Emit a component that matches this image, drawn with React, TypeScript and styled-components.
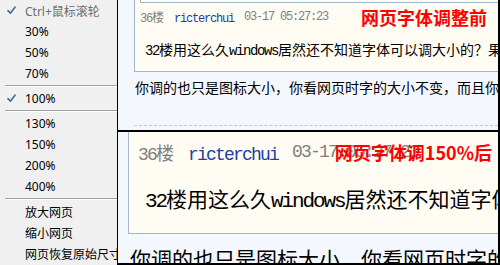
import React from "react";
import styled, { createGlobalStyle } from "styled-components";

// Reference layout: a zoom context menu on the left, two captures of the
// same forum post (100% and 150%) stacked on the right.

const GlobalStyle = createGlobalStyle`
  html, body {
    margin: 0;
    padding: 0;
    background: #ffffff;
  }
  #root {
    width: 500px;
    height: 265px;
    overflow: hidden;
  }
`;

const Frame = styled.div`
  display: flex;
  width: 500px;
  height: 265px;
  overflow: hidden;
`;

/* ---------- context menu ---------- */

const Menu = styled.ul`
  list-style: none;
  margin: 0;
  padding: 0;
  width: 117px;
  flex: none;
  background: #f0f0f0;
  border-right: 1px solid #000;
  font-family: "Noto Sans", "Noto Sans CJK SC", sans-serif;
  font-size: 12px;
  overflow: hidden;
`;

const MenuItem = styled.li<{ $disabled?: boolean }>`
  display: flex;
  align-items: center;
  height: 21px;
  white-space: nowrap;
  color: ${({ $disabled }) => ($disabled ? "#6d6d6d" : "#000")};
`;

const Gutter = styled.span`
  width: 25px;
  flex: none;
  display: flex;
  align-items: center;
  padding-left: 7px;
  box-sizing: border-box;
`;

const Separator = styled.li`
  height: 4px;
  padding-top: 1px;
  box-sizing: border-box;

  &::before {
    content: "";
    display: block;
    margin-left: 5px;
    border-top: 1px solid #a0a0a0;
    border-bottom: 1px solid #ffffff;
  }
`;

const Check = () => (
  <svg width="9" height="9" viewBox="0 0 9 9">
    <path
      d="M1 4.6 L3.4 7.2 L8 1.2"
      fill="none"
      stroke="#4d6a9c"
      strokeWidth="1.7"
      strokeLinecap="round"
      strokeLinejoin="round"
    />
  </svg>
);

/* ---------- captures ---------- */

const Shots = styled.div`
  flex: 1;
  min-width: 0;
  display: flex;
  flex-direction: column;
  border-right: 2px solid #000;
  overflow: hidden;
  font-family: "Noto Sans CJK SC", sans-serif;
  color: #000;
`;

const Shot = styled.section<{ $big?: boolean }>`
  height: ${({ $big }) => ($big ? 133 : 132)}px;
  flex: none;
  box-sizing: border-box;
  padding-left: ${({ $big }) => ($big ? 10 : 16)}px;
  background: #f4f7fd;
  border-bottom: 2px solid #000;
  overflow: hidden;
  white-space: nowrap;
`;

const Post = styled.div<{ $big?: boolean }>`
  background: #fffdf3;
  border-left: 1px solid #a5b4cc;
  border-bottom: 1px solid #a5b4cc;
  padding-bottom: ${({ $big }) => ($big ? 16 : 10)}px;
  overflow: hidden;
`;

const Quote = styled.div`
  margin-left: 5px;
  height: 2px;
  border-left: 1px solid #a5b4cc;
  border-bottom: 1px solid #a5b4cc;
`;

const Meta = styled.div<{ $big?: boolean }>`
  position: relative;
  display: flex;
  align-items: center;
  gap: ${({ $big }) => ($big ? 14 : 10)}px;
  height: ${({ $big }) => ($big ? 28 : 20)}px;
  margin-top: ${({ $big }) => ($big ? 6 : 4)}px;
  padding-left: ${({ $big }) => ($big ? 9 : 5)}px;
  font-size: ${({ $big }) => ($big ? 18 : 12)}px;
  color: #808080;
`;

const Floor = styled.span``;

const Author = styled.span`
  color: #213f9c;
`;

const Latin = styled.span`
  font-family: "Liberation Mono", monospace;
  letter-spacing: -0.1em;
`;

const Stamp = styled.span<{ $overlay?: boolean }>`
  font-family: "Noto Sans CJK SC", sans-serif;
  font-size: 18px;
  font-weight: bold;
  line-height: 20px;
  color: #ff0000;
  ${({ $overlay }) =>
    $overlay
      ? `position: absolute; right: 6px; top: 50%; transform: translateY(-50%);`
      : `margin-left: auto; padding-right: 11px;`}
`;

const Body = styled.p<{ $big?: boolean }>`
  margin: ${({ $big }) => ($big ? 17 : 12)}px 0 0;
  padding-left: ${({ $big }) => ($big ? 16 : 10)}px;
  font-size: ${({ $big }) => ($big ? 21 : 14)}px;
  line-height: ${({ $big }) => ($big ? 30 : 20)}px;
`;

const Reply = styled.p<{ $big?: boolean }>`
  margin: ${({ $big }) => ($big ? 9 : 5)}px 0 0;
  padding-left: ${({ $big }) => ($big ? 2 : 1)}px;
  font-size: ${({ $big }) => ($big ? 21 : 14)}px;
  line-height: ${({ $big }) => ($big ? 30 : 20)}px;
`;

const Rule = styled.hr`
  margin: 28px 0 0;
  border: none;
  border-top: 1px dashed #c8c8c8;
`;

type Entry = { label: string; checked?: boolean; disabled?: boolean } | "sep";

const menu: Entry[] = [
  { label: "Ctrl+鼠标滚轮", checked: true, disabled: true },
  { label: "30%" },
  { label: "50%" },
  { label: "70%" },
  "sep",
  { label: "100%", checked: true },
  "sep",
  { label: "130%" },
  { label: "150%" },
  { label: "200%" },
  { label: "400%" },
  "sep",
  { label: "放大网页" },
  { label: "缩小网页" },
  { label: "网页恢复原始尺寸" },
];

function Capture({ big }: { big?: boolean }) {
  return (
    <Shot $big={big}>
      <Post $big={big}>
        {!big && <Quote />}
        <Meta $big={big}>
          <Floor>
            <Latin>36</Latin>楼
          </Floor>
          <Author>
            <Latin>ricterchui</Latin>
          </Author>
          <Latin>03-17 05:27:23</Latin>
          <Stamp $overlay={big}>{big ? "网页字体调150%后" : "网页字体调整前"}</Stamp>
        </Meta>
        <Body $big={big}>
          <Latin>32</Latin>楼用这么久<Latin>windows</Latin>居然还不知道字体可以调大小的？果然
        </Body>
      </Post>
      <Reply $big={big}>你调的也只是图标大小，你看网页时字的大小不变，而且你的</Reply>
      {!big && <Rule />}
    </Shot>
  );
}

export default function App() {
  return (
    <>
      <GlobalStyle />
      <Frame>
        <Menu>
          {menu.map((entry, i) =>
            entry === "sep" ? (
              <Separator key={i} />
            ) : (
              <MenuItem key={i} $disabled={entry.disabled}>
                <Gutter>{entry.checked && <Check />}</Gutter>
                {entry.label}
              </MenuItem>
            )
          )}
        </Menu>
        <Shots>
          <Capture />
          <Capture big />
        </Shots>
      </Frame>
    </>
  );
}
